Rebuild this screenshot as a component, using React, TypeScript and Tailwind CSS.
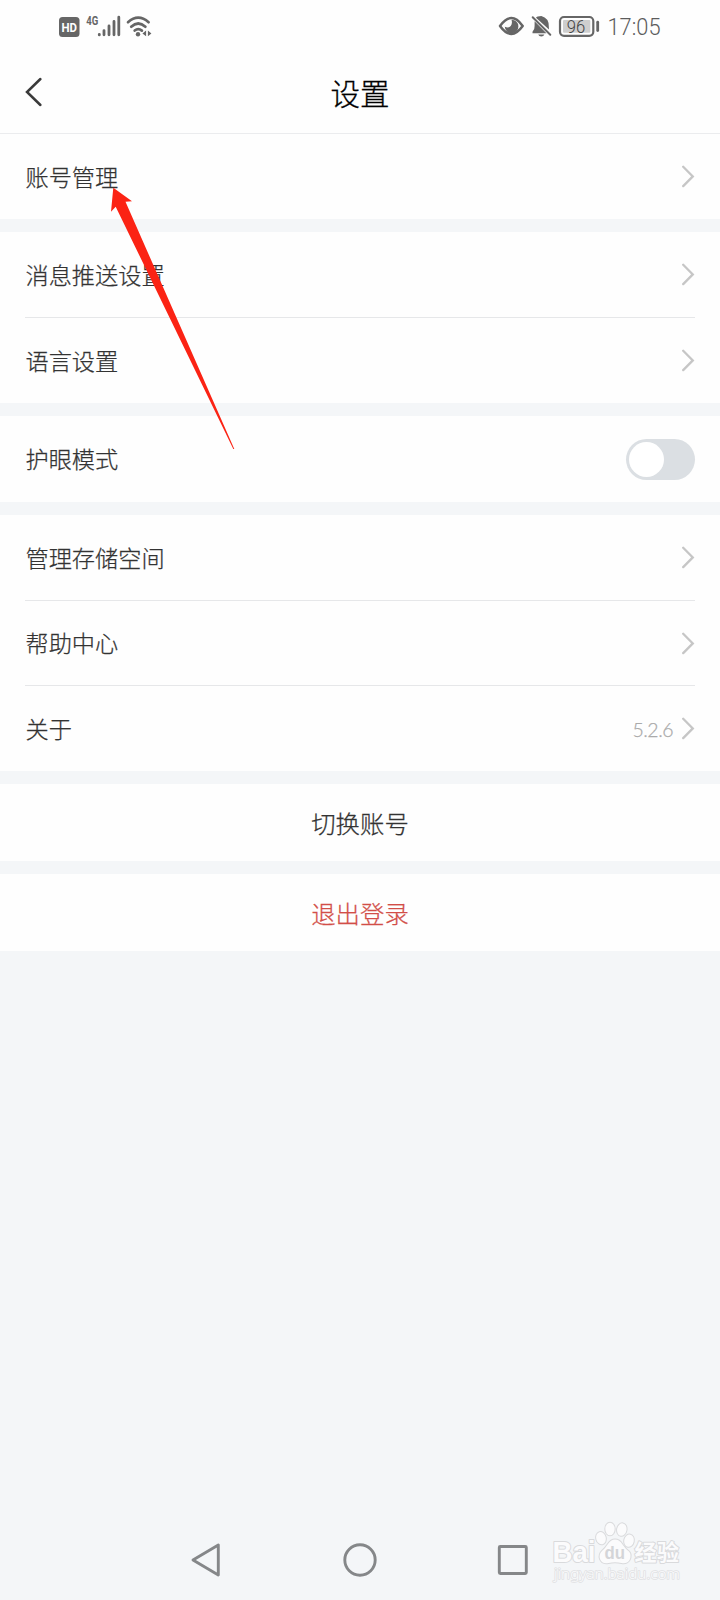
import type { ReactNode } from "react";

const Chevron = () => (
  <svg className="mt-[-1px] h-6 w-[13px] shrink-0" viewBox="0 0 13 24" fill="none" stroke="#c6c6c6" strokeWidth="2.3" strokeLinecap="round" strokeLinejoin="miter">
    <path d="M1.2 2.7 L10.8 12.4 L1.2 22.1" />
  </svg>
);

const Row = ({ label, children, divided, tall = "h-[85px]" }: { label: string; children?: ReactNode; divided?: boolean; tall?: string }) => (
  <div className="px-[25px]">
    <div className={`flex items-center justify-between ${tall} ${divided ? "border-b border-[#e6e7e9]" : ""}`}>
      <span className="pl-[0.5px] text-[23.2px] leading-none text-[#333]">{label}</span>
      <span className="flex items-center gap-[9px]">{children ?? <Chevron />}</span>
    </div>
  </div>
);

const StatusBar = () => (
  <div className="flex h-[54px] justify-between pr-[55px] pl-[59px]">
    <svg className="h-[54px] w-[94px]" viewBox="59 0 94 54" fill="#666">
      <rect x="59" y="17" width="20.5" height="20" rx="3.5" />
      <text x="69.3" y="32" textAnchor="middle" fontFamily="Roboto" fontWeight="700" fontSize="13.5" textLength="15.5" lengthAdjust="spacingAndGlyphs" fill="#fff">HD</text>
      <text x="86.3" y="25.3" fontFamily="Roboto" fontWeight="700" fontSize="13" textLength="12" lengthAdjust="spacingAndGlyphs">4G</text>
      <g stroke="#666" strokeWidth="2.8" strokeLinecap="round">
        <path d="M99.3 34.3v.6M104 30.6v4.2M109 26v8.8M114 21.4v13.4M118.8 17.2v17.6" />
      </g>
      <g fill="none" stroke="#666" strokeWidth="2.7" strokeLinecap="round">
        <path d="M128 22.2Q138.2 13 148.6 22.2M131.2 26.7Q138.2 20.3 145.4 26.7M134.7 30.6Q138.2 27.6 141.9 30.6" />
      </g>
      <circle cx="138" cy="34.3" r="2.2" />
      <path d="M142.4 33.4l3.7-2.9v5.8zM151.4 33.4l-3.5-2.9v5.8z" />
    </svg>
    <div className="flex">
      <svg className="h-[54px] w-[102px]" viewBox="498 0 102 54" fill="none" stroke="#666">
        <path d="M500 26Q511.3 10.2 522.7 26Q511.3 41.8 500 26z" strokeWidth="2.5" strokeLinejoin="round" />
        <path d="M511.5 19.7A6.8 6.8 0 1 1 504.8 26.8Q508.5 28.5 510.7 26Q512.7 23.5 511.5 19.7z" fill="#666" stroke="none" />
        <path d="M536 17.7Q536.8 16 541.3 16Q549 18 548.8 26.5L549 29.4L536 17.7zM534.6 21.3L546.4 33.2H532.5V31.8Q534.8 30 534.6 26zM538.2 34.6H544.4Q543.6 36.6 541.3 36.6Q539 36.6 538.2 34.6z" fill="#666" stroke="none" />
        <path d="M532.7 17.3L550.3 34.8" strokeWidth="2" strokeLinecap="round" />
        <rect x="560" y="17" width="33.3" height="18.8" rx="4" strokeWidth="2.2" />
        <rect x="563" y="20" width="27.3" height="12.8" rx="1" fill="#cecece" stroke="none" />
        <path d="M597.7 22.2v8.4" strokeWidth="2.8" strokeLinecap="round" />
        <text x="576" y="32.5" textAnchor="middle" fontFamily="Roboto" fontWeight="300" fontSize="17.5" textLength="18.5" lengthAdjust="spacingAndGlyphs" fill="#444" stroke="none">96</text>
      </svg>
      <svg className="h-[54px] w-[65px]" viewBox="600 0 65 54">
        <text x="607.5" y="35.2" fontFamily="Roboto" fontWeight="300" fontSize="23.5" textLength="53" lengthAdjust="spacingAndGlyphs" fill="#5c5c5c">17:05</text>
      </svg>
    </div>
  </div>
);

const Watermark = () => (
  <svg className="absolute right-[34px] bottom-3 h-[70px] w-[140px]" viewBox="546 1518 140 70" fill="#fbfbfc" stroke="#d9dadc" strokeWidth="2" strokeLinejoin="round" paintOrder="stroke">
    <text x="552.5" y="1561.5" fontFamily="Liberation Sans" fontWeight="700" fontSize="29" textLength="43" lengthAdjust="spacingAndGlyphs">Bai</text>
    <ellipse cx="601" cy="1538.2" rx="4.8" ry="6.2" transform="rotate(-15 601 1538.2)" />
    <ellipse cx="610" cy="1529" rx="4.7" ry="6.3" />
    <ellipse cx="621.8" cy="1529.6" rx="4.7" ry="6.3" transform="rotate(10 621.8 1529.6)" />
    <ellipse cx="629" cy="1540.7" rx="4.8" ry="6.2" transform="rotate(12 629 1540.7)" />
    <path d="M615 1539.5Q619.5 1539.5 622.5 1544.5Q625.5 1549 629 1551.5Q632 1555 629.5 1560Q627 1564 621.5 1563Q615 1561.5 608.5 1563Q602 1564.3 600 1559Q598.5 1554.5 602 1551Q605.5 1548 607.8 1544.3Q610.8 1539.5 615 1539.5z" />
    <text x="604.5" y="1559" fontFamily="Liberation Sans" fontWeight="700" fontSize="18.5" fill="#d4d5d8" stroke="none" textLength="20.5" lengthAdjust="spacingAndGlyphs">du</text>
    <text x="634.5" y="1560.3" fontFamily="Noto Sans CJK SC" fontWeight="700" fontSize="22" textLength="44.5">经验</text>
    <text x="554" y="1579" fontFamily="Noto Sans" fontSize="15" strokeWidth="1.6" stroke="#e0e1e3" textLength="126" lengthAdjust="spacingAndGlyphs">jingyan.baidu.com</text>
  </svg>
);

export default function App() {
  return (
    <div className="relative flex h-[1600px] w-[720px] flex-col overflow-hidden bg-[#f4f6f8] font-['Noto_Sans_CJK_SC',sans-serif] font-light [-webkit-text-stroke-width:0.25px]">
      <header className="h-[134px] border-b border-[#ebecee] bg-[#fefefe] [-webkit-text-stroke-width:0]">
        <StatusBar />
        <div className="grid h-[79px] grid-cols-3 items-center px-[25px]">
          <svg className="mt-[-3px] h-8 w-5" viewBox="25 76 20 32" fill="none" stroke="#3a3a3a" strokeWidth="2.5" strokeLinecap="round">
            <path d="M40.4 79L27 92L40.4 105" />
          </svg>
          <h1 className="mt-[-1px] text-center text-[29.5px] leading-none font-light text-black [-webkit-text-stroke-width:0.3px]">设置</h1>
        </div>
      </header>
      <main className="flex flex-col gap-[13px]">
        <section className="bg-[#fefefe]">
          <Row label="账号管理" />
        </section>
        <section className="bg-[#fefefe]">
          <Row label="消息推送设置" divided tall="h-[86px]" />
          <Row label="语言设置" />
        </section>
        <section className="bg-[#fefefe]">
          <Row label="护眼模式" tall="h-[86px]">
            <span className="flex h-[41px] w-[69px] items-center rounded-full bg-[#dbdfe3] pl-[3px]">
              <span className="size-[35px] rounded-full bg-white" />
            </span>
          </Row>
        </section>
        <section className="bg-[#fefefe]">
          <Row label="管理存储空间" divided tall="h-[86px]" />
          <Row label="帮助中心" divided />
          <Row label="关于">
            <span className="pt-[2px] font-['Lato'] text-[19.5px] leading-none font-light tracking-[-0.5px] text-[#aaa]">5.2.6</span>
            <Chevron />
          </Row>
        </section>
        <button className="h-[77px] bg-[#fefefe] pt-[2px] text-[24.4px] leading-none text-[#333]">切换账号</button>
        <button className="h-[77px] bg-[#fefefe] pt-[2px] text-[24.4px] leading-none text-[#d24e48]">退出登录</button>
      </main>
      <nav className="mt-auto flex h-20 justify-center">
        <svg className="h-20 w-[360px]" viewBox="180 1520 360 80" fill="none" stroke="#858789" strokeWidth="2.9" strokeLinejoin="round">
          <path d="M193 1560L218.3 1545V1575z" />
          <circle cx="360" cy="1560" r="15.2" />
          <rect x="499.3" y="1546.5" width="27" height="27" rx="1" />
        </svg>
      </nav>
      <svg className="absolute top-[180px] left-[100px] h-[280px] w-[145px]" viewBox="100 180 145 280" fill="#fb2314">
        <path d="M113.3 187.8L132 201.3L125.5 201.8L234.3 449L233.3 449L115.7 206.7L111 211.7z" />
      </svg>
      <Watermark />
    </div>
  );
}
